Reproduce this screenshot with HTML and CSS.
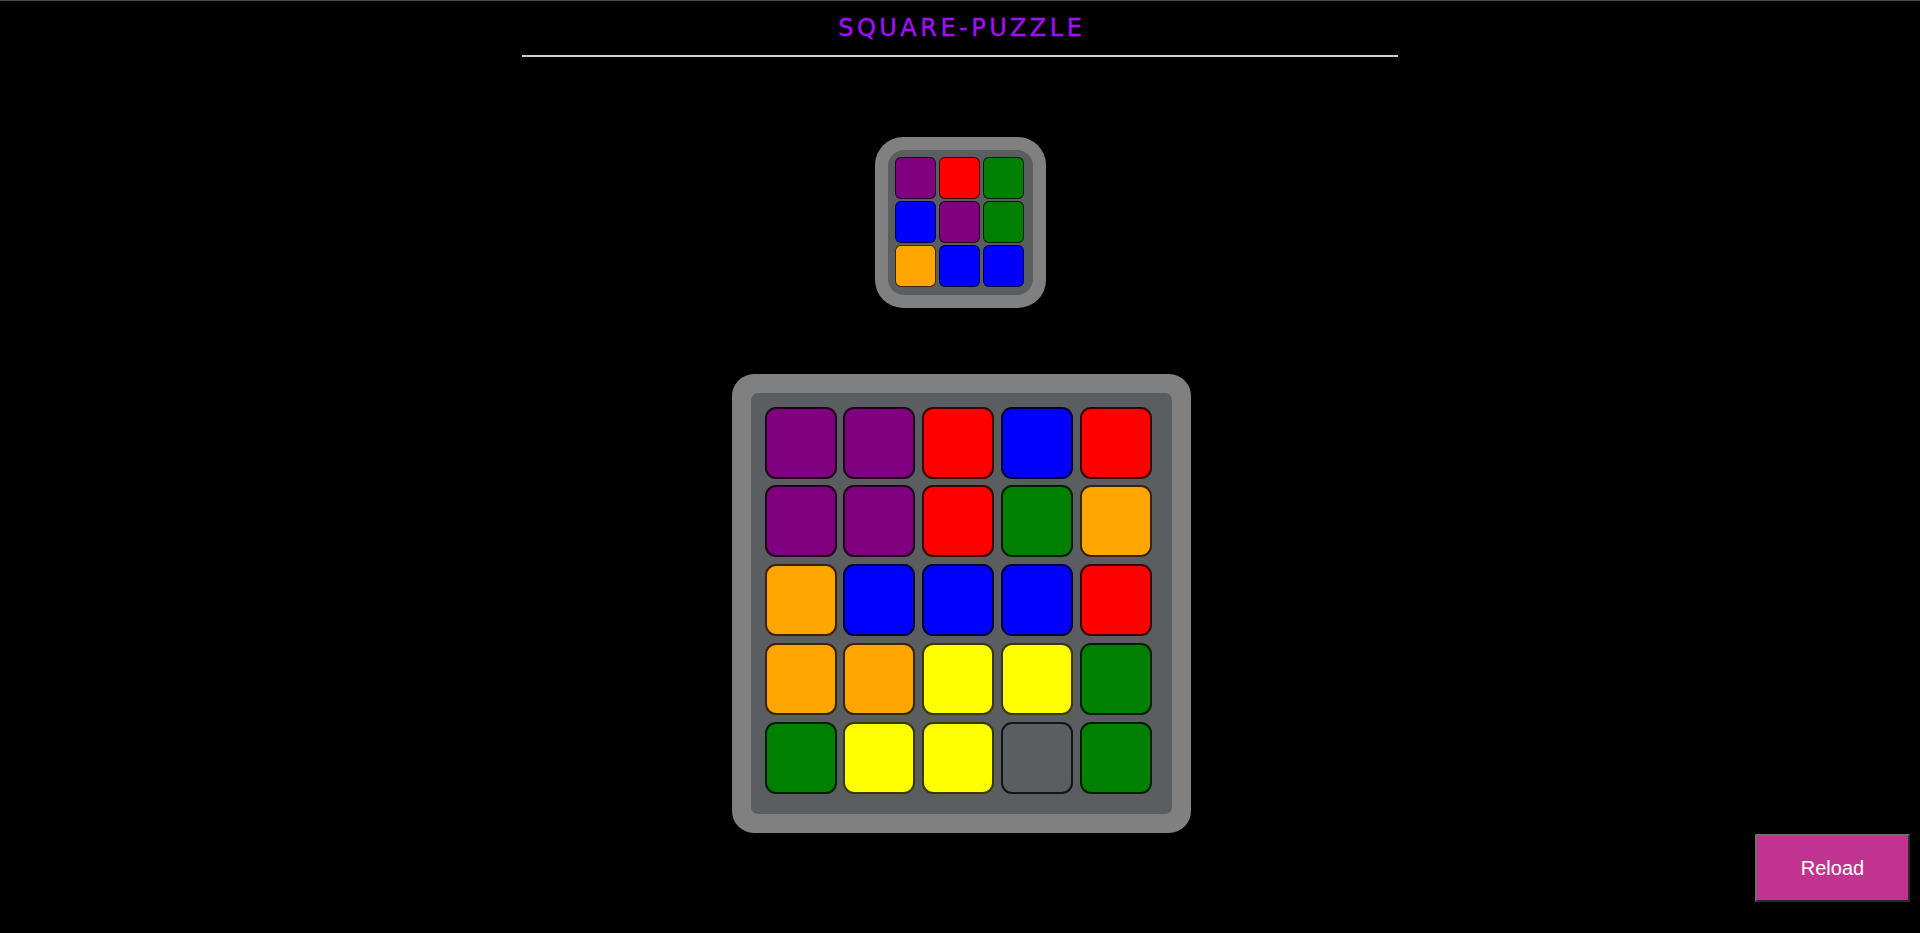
FILE: index.html
```html
<!DOCTYPE html>
<html lang="en">
<head>
<meta charset="utf-8">
<title>Square Puzzle</title>
<link rel="stylesheet" href="styles.css">
</head>
<body>
<header class="header">
  <h1 class="title">SQUARE-PUZZLE</h1>
  <div class="rule"></div>
</header>
<main class="main">
  <div class="board board-small">
    <div class="board-inner">
      <div class="grid grid-small">
        <div class="tile purple"></div>
        <div class="tile red"></div>
        <div class="tile green"></div>
        <div class="tile blue"></div>
        <div class="tile purple"></div>
        <div class="tile green"></div>
        <div class="tile orange"></div>
        <div class="tile blue"></div>
        <div class="tile blue"></div>
      </div>
    </div>
  </div>
  <div class="board board-big">
    <div class="board-inner">
      <div class="grid grid-big">
        <div class="tile purple"></div>
        <div class="tile purple"></div>
        <div class="tile red"></div>
        <div class="tile blue"></div>
        <div class="tile red"></div>

        <div class="tile purple"></div>
        <div class="tile purple"></div>
        <div class="tile red"></div>
        <div class="tile green"></div>
        <div class="tile orange"></div>

        <div class="tile orange"></div>
        <div class="tile blue"></div>
        <div class="tile blue"></div>
        <div class="tile blue"></div>
        <div class="tile red"></div>

        <div class="tile orange"></div>
        <div class="tile orange"></div>
        <div class="tile yellow"></div>
        <div class="tile yellow"></div>
        <div class="tile green"></div>

        <div class="tile green"></div>
        <div class="tile yellow"></div>
        <div class="tile yellow"></div>
        <div class="tile empty"></div>
        <div class="tile green"></div>
      </div>
    </div>
  </div>
</main>
<button class="reload" type="button">Reload</button>
</body>
</html>
```

FILE: styles.css
```css
html, body {
  margin: 0;
  padding: 0;
  background: #000;
  height: 100%;
}

body {
  border-top: 1px solid #4a4a4a;
  box-sizing: border-box;
  font-family: "DejaVu Sans", sans-serif;
}

.header {
  display: flex;
  flex-direction: column;
  align-items: center;
  padding-top: 13px;
}

.title {
  margin: 0;
  font-size: 24px;
  line-height: 28px;
  font-weight: normal;
  letter-spacing: 3.5px;
  margin-right: -3.5px;
  color: #a010f5;
  -webkit-text-stroke: 0.4px #a010f5;
}

.rule {
  width: 876px;
  height: 2px;
  margin-top: 13px;
  background: #cfcfcf;
}

.main {
  display: flex;
  flex-direction: column;
  align-items: center;
  padding-top: 80px;
  gap: 66px;
}

.board {
  background: #808080;
}

.board-inner {
  background: #5a5e60;
}

.grid {
  display: grid;
}

.board-small {
  padding: 13px;
  border-radius: 28px;
  margin-left: 1px;
}

.board-small .board-inner {
  padding: 7px 9px 8px 7px;
  border-radius: 16px;
}

.grid-small {
  grid-template-columns: repeat(3, 41.5px);
  grid-auto-rows: 41.5px;
  gap: 2.5px;
}

.grid-small .tile {
  border: 1px solid rgba(0, 0, 0, 0.75);
  border-radius: 6px;
}

.board-big {
  padding: 19px;
  border-radius: 22px;
  margin-left: 2px;
}

.board-big .board-inner {
  padding: 14px 20px 20px 14px;
  border-radius: 7px;
}

.grid-big {
  grid-template-columns: repeat(5, 72px);
  grid-auto-rows: 72px;
  gap: 6.75px;
}

.grid-big .tile {
  border: 2px solid rgba(0, 0, 0, 0.78);
  border-radius: 11px;
}

.tile {
  box-sizing: border-box;
}

.purple { background: #800080; }
.red { background: #ff0000; }
.green { background: #008000; }
.blue { background: #0000ff; }
.orange { background: #ffa500; }
.yellow { background: #ffff00; }
.empty { background: #5a5e60; }

.reload {
  position: fixed;
  right: 10px;
  bottom: 31px;
  width: 155px;
  height: 68px;
  box-sizing: border-box;
  background: #c0348f;
  border: 2px solid;
  border-color: #6e6e6e #2a2a2a #2a2a2a #6e6e6e;
  color: #fff;
  font-family: "Liberation Sans", Arial, sans-serif;
  font-size: 20px;
  padding: 0;
  cursor: pointer;
}
```
